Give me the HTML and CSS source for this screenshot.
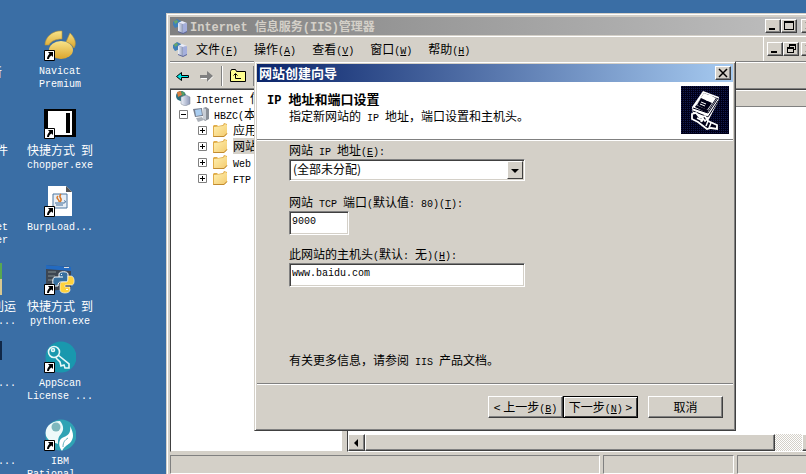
FILE: index.html
```html
<!DOCTYPE html>
<html lang="zh-CN">
<head>
<meta charset="utf-8">
<title>Internet 信息服务(IIS)管理器</title>
<link rel="stylesheet" href="styles.css">
</head>
<body>
<svg class="defs" aria-hidden="true">
  <defs>
    <linearGradient id="gold" x1="0" y1="0" x2="0" y2="1"><stop offset="0" stop-color="#f8e48a"/><stop offset="1" stop-color="#dba52c"/></linearGradient>
    <linearGradient id="paper" x1="0" y1="0" x2="1" y2="1"><stop offset="0" stop-color="#fff0b0"/><stop offset="1" stop-color="#f4cc70"/></linearGradient>
    <linearGradient id="metal" x1="0" y1="0" x2="1" y2="0"><stop offset="0" stop-color="#eef2fa"/><stop offset="1" stop-color="#8d98b8"/></linearGradient>
    <pattern id="dots" width="2" height="2" patternUnits="userSpaceOnUse"><path fill="#000018" d="M0 0h2v2H0z"/><path fill="#141c50" d="M0 0h1v1H0z"/></pattern>
    <symbol id="shortcut" viewBox="0 0 11 11"><path fill="#fff" stroke="#000" d="M.5.5h10v10H.5z"/><path fill="#000" d="M4 2h5v5L7.500 5.500C6 6.500 5 7.500 5 9H3C3 7 4 5.500 5.500 3.700z"/></symbol>
    <symbol id="folder" viewBox="0 0 16 16"><path fill="#e0ac48" d="M1 4l1-1h3l1 1 5-1 1-2 3 1v10l-3 3H1z"/><path fill="url(#paper)" d="M2 5l9-1 2-2 2 1v8l-3 3H2z"/><path stroke="#c08a30" fill="none" d="M1.500 14.500H12l3-3"/></symbol>
    <symbol id="server" viewBox="0 0 16 16"><path fill="#3f7fb8" d="M1 4l4-3 4 2-1 5-5 2-2-3z"/><path fill="#69a868" d="M2 3l3-1 1 2-3 2z"/><path fill="#5b6498" d="M6 5l5-1 4 2v8l-4 2-5-2z"/><path fill="url(#metal)" d="M6 5l5 1v9l-5-2z"/><path fill="#a5afdc" d="M11 6l4-1v8l-4 2z"/><path fill="#e8ecfa" d="M6 5l4-2 5 2-4 1z"/></symbol>
    <symbol id="root" viewBox="0 0 16 16"><circle cx="6" cy="6" r="5" fill="#2a6f80"/><path fill="#d98040" d="M2 2l4-1 1 4-4 2z"/><path fill="#58a060" d="M6 1l4 2-2 4z"/><path fill="url(#metal)" stroke="#7b8490" stroke-width=".5" d="M6 7l5-2 4 2v7l-5 2-4-2z"/></symbol>
    <symbol id="computer" viewBox="0 0 16 16"><path fill="#8a9098" d="M10 2l3-1 3 2v10l-4 2-2-2z"/><path fill="#c8ced6" d="M10 2l3 1v11l-3-1z"/><path fill="#777f90" d="M0 3l9-1 1 8-8 1z"/><path fill="#a9cdf0" d="M2 4l6-1 1 6-6 1z"/><path fill="#aab0b8" d="M3 12l6-1 2 3-6 2z"/></symbol>
  </defs>
</svg>
<main class="desktop">
  <ul class="icons edge">
    <li><div class="pic"></div><span class="end3">新</span></li>
    <li><div class="pic"></div><span class="end2">件</span></li>
    <li><div class="pic"></div><span class="end2 en">et<br>er</span></li>
    <li><div class="pic green"></div><span>利运<br><b class="en">...</b></span></li>
    <li><div class="pic dark"></div><span class="en">...</span></li>
    <li><div class="pic"></div><span class="en">...</span></li>
  </ul>
  <ul class="icons">
    <li>
      <svg viewBox="0 0 32 32"><path fill="url(#gold)" stroke="#b89436" stroke-width=".6" d="M1 16C1 8 9 1 18 2v8C12 10 7 12 5 16zM22 13l4-9c5 5 7 10 4 15-2-3-4-5-8-6z"/><ellipse cx="17" cy="21" rx="12" ry="9" fill="url(#gold)"/><use href="#shortcut" x="0" y="21" width="11" height="11"/></svg>
      <span class="en">Navicat<br>Premium</span>
    </li>
    <li>
      <svg viewBox="0 0 32 32"><path d="M0 2h32v28H0z"/><path fill="#fff" d="M4 4h24v24H4z"/><path d="M22 6h4v20h-4z"/><use href="#shortcut" x="0" y="21" width="11" height="11"/></svg>
      <span>快捷方式<b class="en"> </b>到<br><b class="en">chopper.exe</b></span>
    </li>
    <li>
      <svg viewBox="0 0 32 32"><path fill="#fff" d="M4 1h18l6 6v24H4z"/><path fill="#555" d="M22 1l6 6h-6z"/><path fill="#e8eef5" stroke="#4d77a0" d="M9 9h14v14H9z"/><path fill="none" stroke="#d87828" stroke-width="1.500" d="M17 9c-4 4 3 4-1 8M14 11c-3 3 2 3 1 6"/><path fill="none" stroke="#416c98" d="M11 18h9c2 0 2-3 0-2M12 20h7"/><use href="#shortcut" x="0" y="21" width="11" height="11"/></svg>
      <span class="en">BurpLoad...</span>
    </li>
    <li>
      <svg viewBox="0 0 32 32"><path fill="#3d4652" d="M2 2l25 2v22L2 28z"/><path fill="#236ac0" d="M2 2l25 2v4L2 6z"/><path fill="#ddd" d="M20 4h5v1h-5z"/><path fill="#606a70" d="M4 8h8v2H4zM4 12h7v2H4zM4 16h5v2H4z"/><path fill="#376f9e" stroke="#fff" d="M15 14v-3c0-3 9-3 9 0v6c0 2-1 2-3 2h-4c-2 0-3 1-3 4h-3c-3 0-3-9 0-9h8"/><path fill="#ffd23c" stroke="#fff" stroke-width=".6" d="M24 13h3c4 0 4 9 1 9h-7v2h5v3c0 4-10 4-10 0v-5c0-2 1-3 3-3h3c2 0 2-2 2-6z"/><path fill="#fff" d="M17 11h1v1h-1zM22 26h2v1h-2z"/><use href="#shortcut" x="0" y="21" width="11" height="11"/></svg>
      <span>快捷方式<b class="en"> </b>到<br><b class="en">python.exe</b></span>
    </li>
    <li>
      <svg viewBox="0 0 32 32"><circle cx="17" cy="16" r="15.500" fill="#1998ae"/><g fill="none" stroke="#e8f8f8" stroke-width="1.600"><circle cx="10" cy="11" r="5.500"/><circle cx="9" cy="9" r="1.500"/><path d="M14 14l11 9v4h-4l-1-3-3 1-1-4-4-4"/></g><use href="#shortcut" x="0" y="21" width="11" height="11"/></svg>
      <span class="en">AppScan<br>License ...</span>
    </li>
    <li>
      <svg viewBox="0 0 32 32"><circle cx="17" cy="16" r="15.500" fill="#2fa3b4"/><path fill="#eefafa" d="M16 2C6 2 0 9 2 17c3 6 7 6 12 8 0-4 0-7 3-10 3-4 3-8-1-13z"/><circle cx="12" cy="8" r="4.500" fill="#7db8bd"/><path fill="#fff" d="M26 7c4 8 4 12 0 17-4 3-6 4-8 8-4-5-4-12 2-14 5-2 7-5 6-11z"/><path fill="none" stroke="#5cb0ba" d="M19 28c0-5 2-7 5-9"/><use href="#shortcut" x="0" y="21" width="11" height="11"/></svg>
      <span class="en">IBM<br>Rational...</span>
    </li>
  </ul>

  <section class="window iis">
    <header class="title inactive">
      <svg class="i16" viewBox="0 0 16 16"><use href="#server"/></svg>
      <h1><span class="en">Internet </span>信息服务<span class="en">(IIS)</span>管理器</h1>
      <button class="cap" aria-label="最小化"><svg viewBox="0 0 12 10"><path d="M2 7h6v2H2z"/></svg></button>
      <button class="cap" aria-label="最大化"><svg viewBox="0 0 12 10"><path fill-rule="evenodd" d="M1 0h10v9H1zM2 2v6h8V2z"/></svg></button>
      <button class="cap gap" aria-label="关闭"><svg viewBox="0 0 12 10"><path stroke="#000" stroke-width="1.500" d="M3 1l7 7M10 1L3 8"/></svg></button>
    </header>
    <nav class="menu">
      <svg class="i16" viewBox="0 0 16 16"><use href="#server"/></svg>
      <button>文件<span class="en">(<u>F</u>)</span></button>
      <button>操作<span class="en">(<u>A</u>)</span></button>
      <button>查看<span class="en">(<u>V</u>)</span></button>
      <button>窗口<span class="en">(<u>W</u>)</span></button>
      <button>帮助<span class="en">(<u>H</u>)</span></button>
      <div class="mdi">
        <button class="cap" aria-label="最小化"><svg viewBox="0 0 12 10"><path d="M2 7h6v2H2z"/></svg></button>
        <button class="cap" aria-label="还原"><svg viewBox="0 0 12 10"><path fill-rule="evenodd" d="M4 0h7v6H9v3H2V3h2zM5 2v1h4v2h1V2zM3 5v3h5V5z"/></svg></button>
        <button class="cap gap" aria-label="关闭"><svg viewBox="0 0 12 10"><path stroke="#000" stroke-width="1.500" d="M3 1l7 7M10 1L3 8"/></svg></button>
      </div>
    </nav>
    <div class="tools">
      <button aria-label="后退"><svg viewBox="0 0 16 16"><path fill="#00e8e8" stroke="#000" d="M1.500 8.500l5-4v3h7v2h-7v3z"/></svg></button>
      <button aria-label="前进"><svg viewBox="0 0 16 16"><path fill="#808080" d="M15 8l-6-5v4H2v3h7v4z"/><path stroke="#fff" d="M3 10.500h6M10 13.500l5-5"/></svg></button>
      <i></i>
      <button aria-label="向上"><svg viewBox="0 0 16 16"><path fill="#ffff90" stroke="#000" d="M.5 3.500l1-2h4l1 2h9v10H.5z"/><path fill="none" stroke="#000" d="M5.500 6v4.500H11M3.500 7.500l2-2 2 2"/></svg></button>
      <i></i>
    </div>
    <div class="panes">
      <ul class="tree">
        <li><svg class="i16" viewBox="0 0 16 16"><use href="#root"/></svg><span><span class="en">Internet </span>信息服务</span></li>
        <li class="l1"><svg class="exp" viewBox="0 0 9 9"><path fill="#fff" stroke="#808080" d="M.5.5h8v8h-8z"/><path d="M2 4h5v1H2z"/></svg><svg class="i16" viewBox="0 0 16 16"><use href="#computer"/></svg><span><span class="en">HBZC(</span>本地计算机</span></li>
        <li class="l2"><svg class="exp" viewBox="0 0 9 9"><path fill="#fff" stroke="#808080" d="M.5.5h8v8h-8z"/><path d="M2 4h5v1H2zM4 2h1v5H4z"/></svg><svg class="i16" viewBox="0 0 16 16"><use href="#folder"/></svg><span>应用程序池</span></li>
        <li class="l2"><svg class="exp" viewBox="0 0 9 9"><path fill="#fff" stroke="#808080" d="M.5.5h8v8h-8z"/><path d="M2 4h5v1H2zM4 2h1v5H4z"/></svg><svg class="i16" viewBox="0 0 16 16"><use href="#folder"/></svg><mark>网站</mark></li>
        <li class="l2"><svg class="exp" viewBox="0 0 9 9"><path fill="#fff" stroke="#808080" d="M.5.5h8v8h-8z"/><path d="M2 4h5v1H2zM4 2h1v5H4z"/></svg><svg class="i16" viewBox="0 0 16 16"><use href="#folder"/></svg><span><span class="en">Web </span>服务扩展</span></li>
        <li class="l2"><svg class="exp" viewBox="0 0 9 9"><path fill="#fff" stroke="#808080" d="M.5.5h8v8h-8z"/><path d="M2 4h5v1H2zM4 2h1v5H4z"/></svg><svg class="i16" viewBox="0 0 16 16"><use href="#folder"/></svg><span><span class="en">FTP </span>站点</span></li>
      </ul>
      <div class="list">
        <div class="colhead"></div>
        <div class="rows"></div>
        <div class="scroll">
          <button aria-label="向左滚动"><svg viewBox="0 0 8 8"><path d="M6 0v8L2 4z"/></svg></button>
          <div class="thumb"></div>
          <button aria-label="向右滚动"><svg viewBox="0 0 8 8"><path d="M2 0v8l4-4z"/></svg></button>
        </div>
      </div>
    </div>
    <footer class="status"><div></div><div></div><div></div></footer>
  </section>

  <form class="window wizard">
    <header class="title">
      <h2>网站创建向导</h2>
      <button type="button" class="cap" aria-label="关闭"><svg viewBox="0 0 12 10"><path stroke="#000" stroke-width="1.500" d="M2 1l8 8M10 1L2 9"/></svg></button>
    </header>
    <div class="banner">
      <div>
        <h3><span class="en">IP </span>地址和端口设置</h3>
        <p>指定新网站的<span class="en"> IP </span>地址，端口设置和主机头。</p>
      </div>
      <svg viewBox="0 0 48 48"><path fill="url(#dots)" d="M0 0h48v48H0z"/><path fill="#fff" d="M11 21L22 5l16 6-1 5-10 19-15-6z"/><path fill="#000018" d="M14 21l9-14 13 5-10 15z"/><path fill="#fff" d="M15 19l8-12 12 5-8 12z"/><path fill="#000018" d="M16 19l4-7 11 5-5 7z"/><ellipse cx="28" cy="12" rx="4" ry="3" fill="#fff"/><path stroke="#fff" d="M19 18l5 2M20 16l5 2"/><path stroke="#000018" fill="none" d="M12 22l15 5 10-15M12 25l15 6 10-16"/><path fill="#000018" stroke="#fff" stroke-width="1.800" d="M11 28l4-1 4 5 5-2 3 5 9 4v4l-6-1-4 1-9-7-6-3z"/><path stroke="#fff" stroke-width="1.500" fill="none" d="M16 32l6 3M22 30l-2 6M27 35l-2 5M30 37l-2 5M21 31l3 4 4-4"/></svg>
    </div>
    <div class="fields">
      <label for="ip">网站<span class="en"> IP </span>地址<span class="en">(<u>E</u>):</span></label>
      <div class="combo"><select id="ip"><option>(全部未分配)</option></select><span class="arrow"><svg viewBox="0 0 8 8"><path d="M0 2h8L4 6z"/></svg></span></div>
      <label for="port">网站<span class="en"> TCP </span>端口<span class="en">(</span>默认值<span class="en">: 80)(<u>T</u>):</span></label>
      <input id="port" class="short" value="9000">
      <label for="host">此网站的主机头<span class="en">(</span>默认<span class="en">: </span>无<span class="en">)(<u>H</u>):</span></label>
      <input id="host" value="www.baidu.com">
      <p>有关更多信息，请参阅<span class="en"> IIS </span>产品文档。</p>
    </div>
    <footer class="actions">
      <button type="button">&lt; 上一步<span class="en">(<u>B</u>)</span></button>
      <button type="button" class="default">下一步<span class="en">(<u>N</u>)</span> &gt;</button>
      <button type="button" class="cancel">取消</button>
    </footer>
  </form>
</main>
</body>
</html>
```

FILE: styles.css
```css
* { box-sizing: border-box; }
html, body { height: 100%; margin: 0; }
body, button, select {
  font-family: "Noto Sans CJK SC", sans-serif;
  font-size: 12px;
  line-height: 14px;
  color: #000;
}
h1, h2, h3, p, ul { margin: 0; padding: 0; }
ul { list-style: none; }
svg { display: block; flex: none; }
button { padding: 0; border: 0; background: none; }
.defs { position: absolute; width: 0; height: 0; }
.en, input {
  font-family: "Liberation Mono", monospace;
  font-size: 10px;
  white-space: pre;
}
/* Latin runs sit on the surrounding line without making it taller */
.en { line-height: 0; }
.i16 { width: 16px; height: 16px; }

/* Desktop */
.desktop {
  position: relative;
  height: 100%;
  overflow: hidden;
  background: #3a6ea5;
  display: flex;
  padding-top: 29px;
}
.icons { width: 88px; color: #fff; text-align: center; }
.icons li { height: 78px; display: flex; flex-direction: column; align-items: center; gap: 4px; }
.icons svg { width: 32px; height: 32px; }
.icons span { line-height: 13px; white-space: nowrap; }
.icons b { font-weight: normal; }
.edge { width: 16px; text-align: right; }
.edge li { align-items: flex-end; }
.edge .end2 { padding-right: 8px; }
.edge .end3 { padding-right: 14px; }
.pic { flex: none; align-self: flex-start; height: 32px; width: 2px; }
.green { background: linear-gradient(#58a850 50%, #d8c890 50%); }
.dark { background: linear-gradient(#102848 60%, transparent 60%); }

/* Windows */
.window {
  position: absolute;
  background: #d4d0c8;
  border: 1px solid;
  border-color: #d4d0c8 #404040 #404040 #d4d0c8;
  box-shadow: inset 1px 1px #fff, inset -1px -1px #808080;
  display: flex;
  flex-direction: column;
}
.title {
  height: 18px;
  flex: none;
  display: flex;
  align-items: center;
  padding: 0 2px;
  gap: 2px;
  color: #fff;
  background: linear-gradient(90deg, #0a246a, #a6caf0);
}
.title h1, .title h2 { flex: 1; line-height: 18px; }
.title h1, .title h1 .en { font-size: 12px; }
.title h2, .banner h3 { font-size: 13px; }
.inactive { background: linear-gradient(90deg, #808080, #c0c0c0); color: #d4d0c8; }
.cap {
  flex: none;
  width: 16px;
  height: 14px;
  padding: 1px;
  background: #d4d0c8;
  border: 1px solid;
  border-color: #fff #404040 #404040 #fff;
  box-shadow: inset -1px -1px #808080;
}
.cap svg { width: 12px; height: 10px; }
.title .cap { margin-left: -2px; }
.title .gap, .mdi .gap { margin-left: 2px; }

/* IIS manager */
.iis { left: 166px; right: -17px; top: 13px; bottom: -4px; padding: 3px; }
.menu {
  height: 26px;
  flex: none;
  display: flex;
  align-items: center;
  padding-left: 2px;
  border-top: 1px solid #fff;
  border-bottom: 1px solid #808080;
  margin-top: 1px;
}
.menu > button { margin-right: 16px; }
.menu > .i16 { margin-right: 8px; }
.mdi { margin-left: auto; align-self: stretch; display: flex; align-items: center; border-left: 1px solid #fff; padding: 0 2px 0 3px; }
.tools {
  height: 27px;
  flex: none;
  display: flex;
  align-items: center;
  gap: 7px;
  padding-left: 5px;
  border-top: 1px solid #fff;
  border-bottom: 1px solid #808080;
}
.tools svg { width: 16px; height: 16px; }
.tools i { width: 2px; height: 20px; border-left: 1px solid #808080; border-right: 1px solid #fff; }
.panes { flex: 1; display: flex; gap: 4px; min-height: 0; }
.tree {
  width: 173px;
  flex: none;
  overflow: hidden;
  background: #fff;
  border: 1px solid;
  border-color: #404040 #d4d0c8 #d4d0c8 #404040;
  padding: 0 0 0 4px;
}
.tree li { height: 16px; display: flex; align-items: center; gap: 5px; white-space: pre; }
.tree .l1 { padding-left: 4px; }
.tree .l2 { padding-left: 23px; }
.exp { width: 9px; height: 9px; }
.tree mark { background: #d4d0c8; line-height: 16px; }
.list { flex: 1; display: flex; flex-direction: column; border-left: 1px solid #404040; border-top: 1px solid #404040; border-bottom: 1px solid #fff; }
.colhead { height: 17px; border: 1px solid; border-color: #fff #fff #808080; }
.rows { flex: 1; background: #fff; }
.scroll {
  height: 17px;
  display: flex;
  background: repeating-conic-gradient(#fff 0 25%, #d4d0c8 0 50%) 0 0 / 2px 2px;
}
.scroll button, .thumb {
  background: #d4d0c8;
  border: 1px solid;
  border-color: #fff #404040 #404040 #fff;
  box-shadow: inset -1px -1px #808080;
}
.scroll button { width: 17px; padding: 3px; flex: none; }
.scroll svg { width: 8px; height: 8px; }
.thumb { flex: 1; margin-right: 27px; }
.status { height: 22px; flex: none; display: flex; gap: 3px; padding-top: 3px; }
.status div { border: 1px solid; border-color: #808080 #fff #fff #808080; width: 82px; }
.status div:first-child { flex: 1; }
.status div:nth-child(2) { width: 131px; }

/* Site wizard */
.wizard { left: 254px; top: 61px; width: 482px; padding: 2px; }
.banner {
  height: 58px;
  background: #fff;
  border-bottom: 1px solid #808080;
  display: flex;
  justify-content: space-between;
  padding: 4px 4px 0 10px;
}
.banner > div { padding-top: 5px; }
.banner h3 { line-height: 16px; }
.banner h3 .en { font-size: 12px; }
.banner p { line-height: 18px; padding-left: 22px; }
.banner svg { width: 48px; height: 48px; }
.fields {
  display: flex;
  flex-direction: column;
  align-items: flex-start;
  border-top: 1px solid #fff;
  border-bottom: 1px solid #808080;
  padding: 2px 32px 16px;
}
.fields label { line-height: 14px; margin-bottom: 2px; }
.combo, .fields input {
  width: 236px;
  height: 22px;
  background: #fff;
  border: 1px solid;
  border-color: #808080 #fff #fff #808080;
  box-shadow: inset 1px 1px #404040, inset -1px -1px #d4d0c8;
  margin-bottom: 14px;
}
.fields input { height: 24px; padding: 0 2px 4px; margin-bottom: 12px; outline: 0; }
.fields .short { width: 60px; }
.combo { position: relative; }
.combo select {
  appearance: none;
  width: 100%;
  height: 18px;
  border: 0;
  padding: 0 3px;
  background: none;
}
.arrow {
  position: absolute;
  right: 1px;
  top: 1px;
  width: 16px;
  height: 18px;
  padding: 5px 3px;
  pointer-events: none;
  background: #d4d0c8;
  border: 1px solid;
  border-color: #fff #404040 #404040 #fff;
}
.arrow svg { width: 8px; height: 8px; }
.fields p { margin-top: 54px; }
.actions {
  height: 44px;
  display: flex;
  justify-content: flex-end;
  align-items: center;
  padding-right: 10px;
  border-top: 1px solid #fff;
}
.actions button {
  width: 75px;
  height: 22px;
  white-space: nowrap;
  background: #d4d0c8;
  border: 1px solid;
  border-color: #fff #404040 #404040 #fff;
  box-shadow: inset -1px -1px #808080;
}
.actions .default { border-color: #000; box-shadow: inset 1px 1px #fff, inset -1px -1px #404040; outline: 1px solid #000; outline-offset: -1px; }
.actions .cancel { margin-left: 10px; }
```
